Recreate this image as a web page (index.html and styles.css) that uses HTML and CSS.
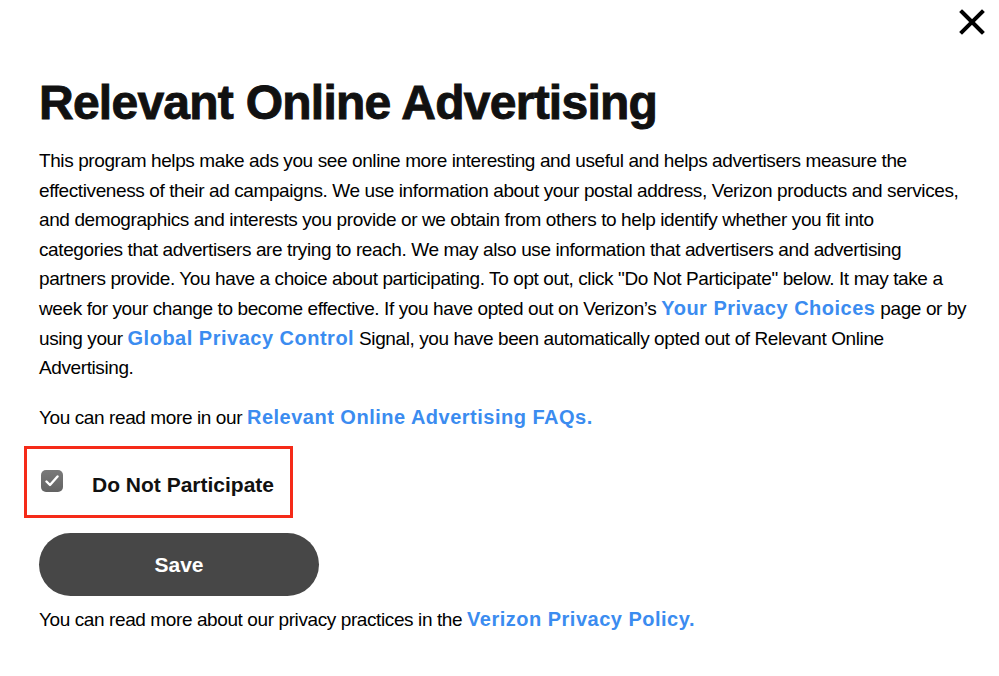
FILE: index.html
```html
<!DOCTYPE html>
<html lang="en">
<head>
<meta charset="utf-8">
<title>Relevant Online Advertising</title>
<link rel="stylesheet" href="styles.css">
</head>
<body>
<div class="modal">
  <button class="close" aria-label="Close">
    <svg width="26" height="26" viewBox="0 0 26 26"><path d="M3 3L23 23M23 3L3 23" stroke="#000" stroke-width="4" stroke-linecap="square"/></svg>
  </button>
  <h1 class="title">Relevant Online Advertising</h1>
  <p class="body">This program helps make ads you see online more interesting and useful and helps advertisers measure the<br>effectiveness of their ad campaigns. We use information about your postal address, Verizon products and services,<br>and demographics and interests you provide or we obtain from others to help identify whether you fit into<br>categories that advertisers are trying to reach. We may also use information that advertisers and advertising<br>partners provide. You have a choice about participating. To opt out, click "Do Not Participate" below. It may take a<br>week for your change to become effective. If you have opted out on Verizon’s <a class="link" href="#">Your Privacy Choices</a> page or by<br>using your <a class="link" href="#">Global Privacy Control</a> Signal, you have been automatically opted out of Relevant Online<br>Advertising.</p>
  <p class="body faq">You can read more in our <a class="link" href="#">Relevant Online Advertising FAQs.</a></p>
  <div class="optbox">
    <label class="opt">
      <span class="check"><svg width="14" height="12" viewBox="0 0 14 12"><path d="M1.5 6.5L5 10L12.5 1.5" fill="none" stroke="#fff" stroke-width="2.4" stroke-linecap="round" stroke-linejoin="round"/></svg></span>
      <span class="opt-label">Do Not Participate</span>
    </label>
  </div>
  <button class="save">Save</button>
  <p class="body foot">You can read more about our privacy practices in the <a class="link" href="#">Verizon Privacy Policy.</a></p>
</div>
</body>
</html>
```
FILE: styles.css
```css
html, body { margin: 0; padding: 0; background: #fff; }
body { font-family: "Liberation Sans", Arial, sans-serif; color: #000; }
.modal { position: relative; padding: 76px 0 0 39px; width: 960px; }
.close { position: absolute; top: 9px; right: 14px; background: none; border: 0; padding: 0; width: 26px; height: 26px; cursor: pointer; }
.title { margin: 0; font-size: 48px; font-weight: 700; letter-spacing: -0.75px; line-height: 54px; color: #111; -webkit-text-stroke: 0.9px #111; }
.body { margin: 0; font-size: 19px; line-height: 29.6px; letter-spacing: -0.4px; color: #000; white-space: nowrap; }
.title + .body { margin-top: 16px; }
.link { color: #3b8cf0; font-weight: 700; text-decoration: none; letter-spacing: 0.5px; font-size: 20px; }
.faq { margin-top: 20px; }
.optbox { margin: 14px 0 0 -15px; width: 263px; height: 66px; border: 3px solid #f52a18; box-sizing: content-box; display: flex; align-items: flex-start; }
.opt { display: flex; align-items: flex-start; padding-left: 14px; }
.check { width: 22px; height: 22px; border-radius: 5px; background: linear-gradient(#7a7a7a, #636363); display: flex; align-items: center; justify-content: center; margin-top: 21px; }
.opt-label { margin: 24px 0 0 29px; line-height: 24px; font-size: 21px; font-weight: 700; color: #111; letter-spacing: 0; }
.save { display: block; margin-top: 15px; width: 280px; height: 63px; border: 0; border-radius: 32px; background: #474747; color: #fff; font-family: "Liberation Sans", Arial, sans-serif; font-size: 21px; font-weight: 700; }
.foot { margin-top: 9px; }
```
